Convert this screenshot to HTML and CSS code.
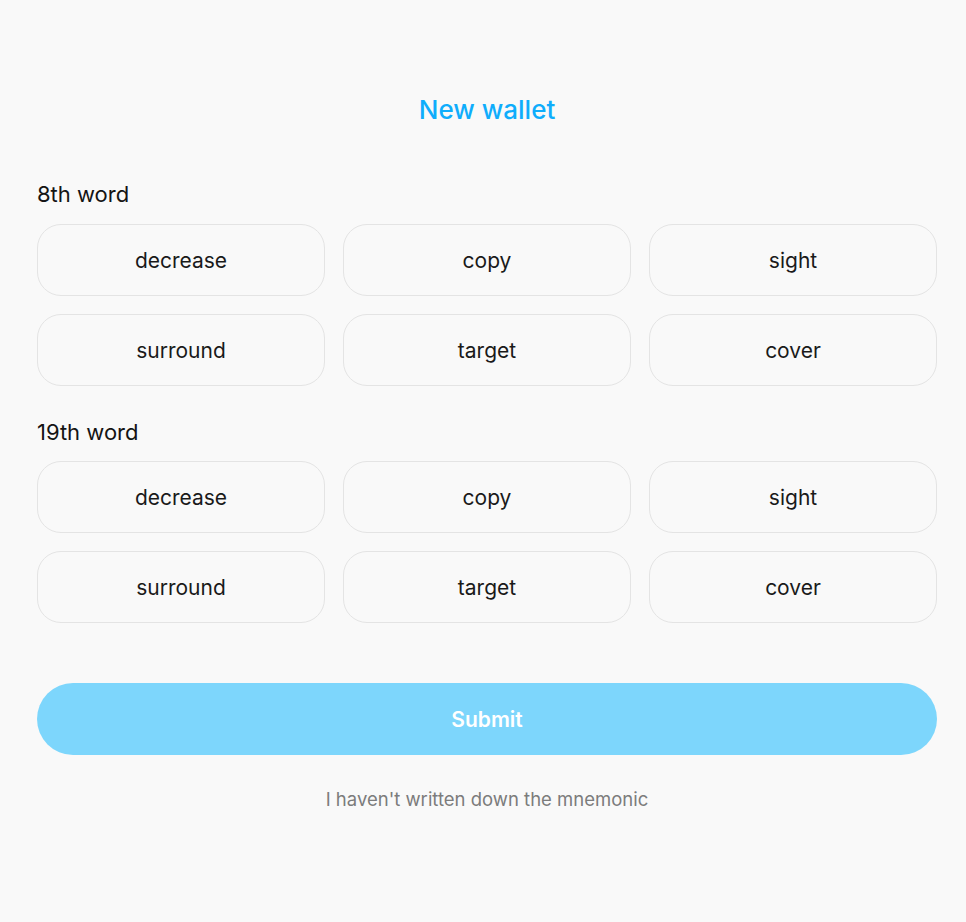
FILE: index.html
```html
<!DOCTYPE html>
<html lang="en">
<head>
<meta charset="utf-8">
<title>New wallet</title>
<link rel="stylesheet" href="styles.css">
</head>
<body>
<main class="page">
  <h1 class="title">New wallet</h1>
  <section class="section">
    <h2 class="label">8th word</h2>
    <div class="grid">
      <button class="word">decrease</button>
      <button class="word">copy</button>
      <button class="word">sight</button>
      <button class="word">surround</button>
      <button class="word">target</button>
      <button class="word">cover</button>
    </div>
  </section>
  <section class="section second">
    <h2 class="label">19th word</h2>
    <div class="grid">
      <button class="word">decrease</button>
      <button class="word">copy</button>
      <button class="word">sight</button>
      <button class="word">surround</button>
      <button class="word">target</button>
      <button class="word">cover</button>
    </div>
  </section>
  <button class="submit">Submit</button>
  <a class="skip" href="#">I haven't written down the mnemonic</a>
</main>
</body>
</html>
```

FILE: styles.css
```css
html, body {
  margin: 0;
  padding: 0;
  background: #f9f9f9;
}
body {
  font-family: Inter, "Noto Sans", sans-serif;
  color: #1a1a1a;
}
.page {
  padding: 94px 29px 0 37px;
  display: flex;
  flex-direction: column;
}
.title {
  margin: 0;
  font-size: 26px;
  line-height: 32px;
  font-weight: 500;
  color: #0fadfc;
  text-align: center;
}
.section {
  margin-top: 54px;
  display: flex;
  flex-direction: column;
  gap: 16px;
}
.section.second {
  margin-top: 32px;
  gap: 15px;
}
.label {
  margin: 0;
  font-size: 22px;
  line-height: 28px;
  font-weight: 400;
  color: #141414;
}
.grid {
  display: grid;
  grid-template-columns: repeat(3, 1fr);
  gap: 18px;
}
.word {
  height: 72px;
  border: 1px solid #e4e4e4;
  border-radius: 24px;
  background: #f9f9f9;
  font-family: inherit;
  font-size: 21px;
  color: #1a1a1a;
  padding: 0;
}
.submit {
  margin-top: 60px;
  height: 72px;
  border: none;
  border-radius: 36px;
  background: #7dd6fc;
  color: #ffffff;
  font-family: inherit;
  font-size: 21px;
  font-weight: 600;
  padding: 0;
}
.skip {
  margin-top: 32px;
  align-self: center;
  font-size: 18.5px;
  line-height: 24px;
  color: #7c7c7c;
  text-decoration: none;
}
```
